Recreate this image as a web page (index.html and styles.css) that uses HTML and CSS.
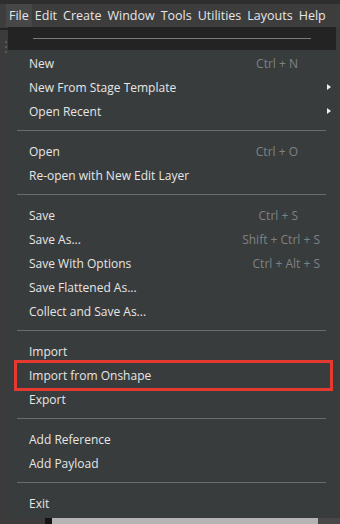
FILE: index.html
```html
<!DOCTYPE html>
<html lang="en">
<head>
  <meta charset="UTF-8">
  <title>File menu</title>
  <link rel="stylesheet" href="styles.css">
</head>
<body>
  <div class="topstrip"></div>
  <nav class="menubar">
    <span class="menubar-item active">File</span>
    <span class="menubar-item">Edit</span>
    <span class="menubar-item">Create</span>
    <span class="menubar-item">Window</span>
    <span class="menubar-item">Tools</span>
    <span class="menubar-item">Utilities</span>
    <span class="menubar-item">Layouts</span>
    <span class="menubar-item">Help</span>
  </nav>

  <div class="workspace">
    <div class="side">
      <div class="side-line"></div>
      <div class="side-dot"></div>
      <div class="side-dot"></div>
      <div class="side-dot"></div>
    </div>

    <div class="menu">
      <div class="tearoff"><div class="tearoff-line"></div></div>
      <div class="menu-body">
        <div class="item"><span>New</span><span class="shortcut short">Ctrl + N</span></div>
        <div class="item"><span>New From Stage Template</span><span class="arrow"></span></div>
        <div class="item"><span>Open Recent</span><span class="arrow"></span></div>
        <div class="sep"></div>
        <div class="item"><span>Open</span><span class="shortcut short">Ctrl + O</span></div>
        <div class="item"><span>Re-open with New Edit Layer</span></div>
        <div class="sep"></div>
        <div class="item"><span>Save</span><span class="shortcut short">Ctrl + S</span></div>
        <div class="item"><span>Save As...</span><span class="shortcut">Shift + Ctrl + S</span></div>
        <div class="item"><span>Save With Options</span><span class="shortcut">Ctrl + Alt + S</span></div>
        <div class="item"><span>Save Flattened As...</span></div>
        <div class="item"><span>Collect and Save As...</span></div>
        <div class="sep"></div>
        <div class="item"><span>Import</span></div>
        <div class="item highlight"><span>Import from Onshape</span></div>
        <div class="item"><span>Export</span></div>
        <div class="sep"></div>
        <div class="item"><span>Add Reference</span></div>
        <div class="item"><span>Add Payload</span></div>
        <div class="sep"></div>
        <div class="item"><span>Exit</span></div>
      </div>
    </div>
  </div>

  <div class="bottom">
    <div class="bottom-left"></div>
    <div class="bottom-edge"></div>
    <div class="bottom-panel"></div>
    <div class="bottom-right"></div>
  </div>
</body>
</html>
```

FILE: styles.css
```css
body {
  margin: 0;
  width: 340px;
  height: 524px;
  overflow: hidden;
  background: #3b3b3b;
  font-family: "Open Sans", "Noto Sans", sans-serif;
  color: #e4e4e4;
}

.topstrip {
  height: 4px;
  background: #2e2e2e;
}

.menubar {
  display: flex;
  height: 23px;
  align-items: stretch;
  background: #3d3d3d;
  padding-left: 6px;
  font-size: 12.5px;
}

.menubar-item {
  display: flex;
  align-items: center;
  padding: 0 3px;
  color: #e6e6e6;
}

.menubar-item.active {
  background: #474747;
}

.workspace {
  display: flex;
  height: 491px;
}

.side {
  width: 8px;
  display: flex;
  flex-direction: column;
  align-items: flex-end;
  gap: 3px;
}

.side-line {
  width: 8px;
  height: 2px;
  margin-top: 1px;
  margin-bottom: 8px;
  background: #242424;
}

.side-dot {
  width: 2px;
  height: 2px;
  margin-right: 1px;
  background: #5a5a5a;
}

.menu {
  width: 328px;
  display: flex;
  flex-direction: column;
  border-radius: 0 0 4px 4px;
  overflow: hidden;
}

.tearoff {
  height: 23px;
  background: #232323;
  padding: 11px 25px 0 25px;
  box-sizing: border-box;
}

.tearoff-line {
  height: 1px;
  background: #7a7a7a;
}

.menu-body {
  flex: 1;
  background: #393c3d;
  padding-top: 1px;
  font-size: 12px;
}

.item {
  position: relative;
  display: flex;
  align-items: center;
  justify-content: space-between;
  height: 24px;
  padding: 0 16px 0 21px;
  color: #e6e6e6;
}

.shortcut {
  color: #7f8282;
}

.shortcut.short {
  margin-right: 22px;
}

.arrow {
  width: 0;
  height: 0;
  margin-right: -11px;
  border-top: 3.5px solid transparent;
  border-bottom: 3.5px solid transparent;
  border-left: 4px solid #f0f0f0;
}

.sep {
  height: 16px;
  display: flex;
  align-items: center;
  padding: 0 10px 0 9px;
}

.sep::before {
  content: "";
  flex: 1;
  height: 1px;
  margin-top: -1px;
  background: #6a6c6c;
}

/* red annotation box */
.highlight::after {
  content: "";
  position: absolute;
  top: -3px;
  bottom: -4px;
  left: 6px;
  right: 3px;
  border: 3px solid #e53a30;
}

.bottom {
  display: flex;
  height: 6px;
}

.bottom-left {
  width: 45px;
  background: #3c3c3c;
}

.bottom-edge {
  width: 7px;
  background: #141414;
}

.bottom-panel {
  width: 266px;
  background: #b4b4b4;
}

.bottom-right {
  flex: 1;
  background: #474747;
}
```
